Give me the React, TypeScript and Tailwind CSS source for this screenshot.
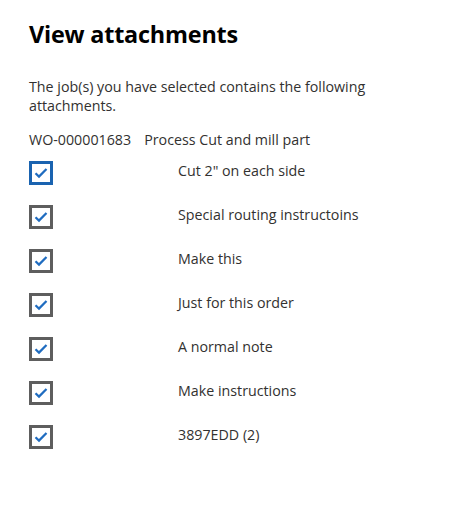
const FONT = "font-['Open_Sans',_'Noto_Sans',_sans-serif]";

const attachments = [
  "Cut 2\" on each side",
  "Special routing instructoins",
  "Make this",
  "Just for this order",
  "A normal note",
  "Make instructions",
  "3897EDD (2)",
];

function CheckBox({ focused }: { focused?: boolean }) {
  return (
    <div
      className={`flex h-6 w-6 shrink-0 items-center justify-center border-[3px] bg-white ${
        focused ? "border-[#1a63b0]" : "border-[#5e5e5e]"
      }`}
    >
      <svg width="14" height="12" viewBox="0 0 14 12" fill="none">
        <path d="M1.5 6.2 L5 9.6 L12.5 2" stroke="#1f6cc0" strokeWidth="2.2" />
      </svg>
    </div>
  );
}

export default function App() {
  return (
    <div className={`h-[527px] w-[456px] bg-white pl-[29px] pt-[19px] text-[#323130] ${FONT}`}>
      <h1 className="text-[23.4px] font-bold leading-[30px] tracking-[-0.2px] text-black">View attachments</h1>

      <p className="mt-[28px] w-[390px] text-[14.25px] leading-[19px]">
        The job(s) you have selected contains the following attachments.
      </p>

      <div className="mt-[15px] flex text-[14.25px] leading-[19px]">
        <span>WO-000001683</span>
        <span className="ml-[13px]">Process Cut and mill part</span>
      </div>

      <div className="mt-[12px] flex flex-col">
        {attachments.map((a, i) => (
          <div key={a} className="flex h-[44px] items-start">
            <CheckBox focused={i === 0} />
            <span className="ml-[125px] text-[14.25px] leading-[19px]">{a}</span>
          </div>
        ))}
      </div>
    </div>
  );
}
